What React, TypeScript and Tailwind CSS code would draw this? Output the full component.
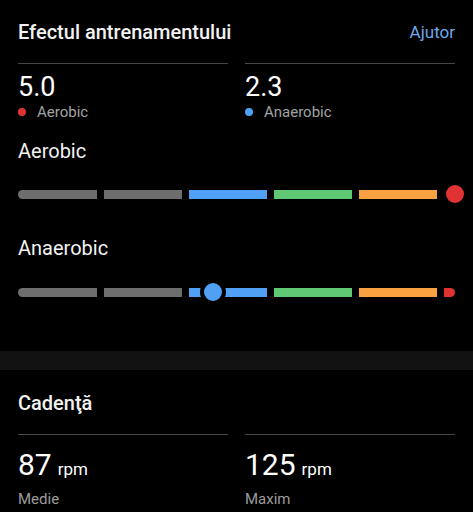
import React from 'react';

const segs = [
  { w: 'w-[79px]', c: 'bg-[#6e6e6e] rounded-l-full' },
  { w: 'w-[78px]', c: 'bg-[#6e6e6e]' },
  { w: 'w-[78px]', c: 'bg-[#50a0f5]' },
  { w: 'w-[78px]', c: 'bg-[#5fc872]' },
  { w: 'w-[78px]', c: 'bg-[#f9a041]' },
  { w: 'w-[11px]', c: 'bg-[#e03232] rounded-r-full' },
];

const Scale: React.FC<{ dot: React.ReactNode }> = ({ dot }) => (
  <div className="relative h-[24px] flex items-center gap-[7px]">
    {segs.map((s, i) => (
      <div key={i} className={`h-[9px] ${s.w} ${s.c}`} />
    ))}
    {dot}
  </div>
);

const Divider = () => <div className="h-px bg-[#474747]" />;

export default function App() {
  return (
    <div className="w-[473px] h-[512px] bg-black overflow-hidden text-white font-['Roboto',sans-serif]">
      <div className="px-[18px] pt-[19px]">
        <div className="flex justify-between items-center h-[26px]">
          <h2 className="text-[20px] leading-[26px] font-medium text-[#f2f2f2]">Efectul antrenamentului</h2>
          <span className="text-[17px] leading-[26px] text-[#6ea8ea]">Ajutor</span>
        </div>

        <div className="grid grid-cols-2 gap-[17px] mt-[18px]">
          <div>
            <Divider />
            <div className="mt-[7px] text-[27px] leading-[32px]">5.0</div>
            <div className="flex items-center gap-[11px] text-[15px] leading-[18px] text-[#a3a3a3]">
              <span className="w-[8px] h-[8px] rounded-full bg-[#e03232]" />
              Aerobic
            </div>
          </div>
          <div>
            <Divider />
            <div className="mt-[7px] text-[27px] leading-[32px]">2.3</div>
            <div className="flex items-center gap-[11px] text-[15px] leading-[18px] text-[#a3a3a3]">
              <span className="w-[8px] h-[8px] rounded-full bg-[#50a0f5]" />
              Anaerobic
            </div>
          </div>
        </div>

        <h3 className="mt-[18px] text-[20px] leading-[24px] text-[#f2f2f2]">Aerobic</h3>
        <div className="mt-[19px]">
          <Scale
            dot={<span className="absolute left-[424px] top-[-1px] w-[26px] h-[26px] rounded-full border-4 border-black bg-[#e03232]" />}
          />
        </div>

        <h3 className="mt-[30px] text-[20px] leading-[24px] text-[#f2f2f2]">Anaerobic</h3>
        <div className="mt-[20px]">
          <Scale
            dot={<span className="absolute left-[182px] top-[-1px] w-[26px] h-[26px] rounded-full border-4 border-black bg-[#50a0f5]" />}
          />
        </div>
      </div>

      <div className="mt-[47px] h-[19px] bg-[#121212]" />

      <div className="px-[18px]">
        <h2 className="mt-[21px] text-[20px] leading-[24px] font-medium text-[#f2f2f2]">Cadenţă</h2>
        <div className="grid grid-cols-2 gap-[17px] mt-[19px]">
          <div>
            <Divider />
            <div className="mt-[12px] flex items-baseline gap-[6px] leading-[36px]">
              <span className="text-[30px]">87</span>
              <span className="text-[17px]">rpm</span>
            </div>
            <div className="mt-[2px] text-[15px] leading-[20px] text-[#9c9c9c]">Medie</div>
          </div>
          <div>
            <Divider />
            <div className="mt-[12px] flex items-baseline gap-[6px] leading-[36px]">
              <span className="text-[30px]">125</span>
              <span className="text-[17px]">rpm</span>
            </div>
            <div className="mt-[2px] text-[15px] leading-[20px] text-[#9c9c9c]">Maxim</div>
          </div>
        </div>
      </div>
    </div>
  );
}
